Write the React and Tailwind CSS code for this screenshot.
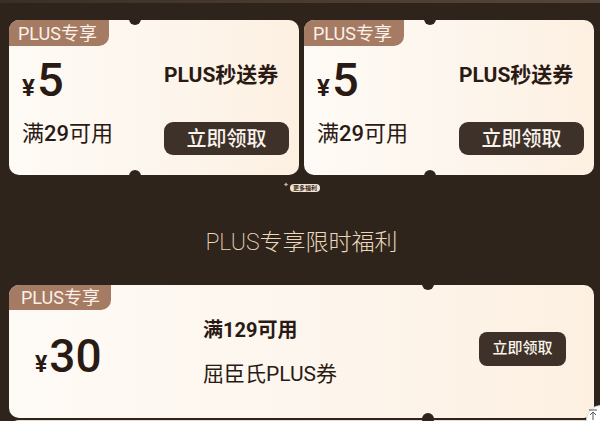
import React from "react";

const FONT = { fontFamily: 'Roboto, "Noto Sans CJK SC", "Noto Sans", sans-serif' };

function Notch({ className }) {
  return <div className={`absolute w-[12px] h-[12px] rounded-full bg-[#2e241c] ${className}`} />;
}

function Tag({ className = "" }) {
  return (
    <div className={`absolute left-0 top-0 bg-[#a57b64] text-[#fbf1e8] rounded-tl-[10px] rounded-br-[10px] flex items-center ${className}`}>
      PLUS专享
    </div>
  );
}

function SmallCard() {
  return (
    <div className="relative w-[290px] h-[155px] rounded-[10px] bg-gradient-to-r from-[#fefaf5] via-[#fdf6ee] to-[#fdf0e1] flex">
      <Tag className="h-[26px] w-[100px] pl-[9px] text-[18px]" />
      <Notch className="left-[120px] -top-[7px]" />
      <Notch className="left-[120px] -bottom-[7px]" />
      <div className="w-[155px] pl-[13px] pt-[36px] flex flex-col">
        <div className="flex items-baseline text-[#2a1a14] leading-none h-[48px]">
          <span className="text-[24px] font-bold mr-[2px]">¥</span>
          <span className="text-[47px] font-medium">5</span>
        </div>
        <div className="mt-[15px] text-[22px] leading-[30px] text-[#2a1a14]">
          满<span className="font-medium">29</span>可用
        </div>
      </div>
      <div className="flex-1 pt-[41px] pr-[10px] flex flex-col">
        <div className="text-[21px] leading-[28px] font-bold text-[#2a1a14] whitespace-nowrap">PLUS秒送券</div>
        <button className="mt-[33px] h-[33px] w-[125px] rounded-[9px] bg-[#3d3129] text-[#fbf4ec] text-[20px] font-medium flex items-center justify-center">
          立即领取
        </button>
      </div>
    </div>
  );
}

export default function App() {
  return (
    <div className="relative w-[600px] h-[421px] overflow-hidden bg-[#2e241c]" style={FONT}>
      <div className="h-[3px] bg-gradient-to-r from-[#3b2f25] via-[#4a3b2e] to-[#56463a]" />
      <div className="pl-[9px] pr-[6px] pt-[17px]">
        <div className="flex gap-[5px]">
          <SmallCard />
          <SmallCard />
        </div>
        <div className="h-[110px] flex flex-col items-center">
          <div className="mt-[9px] flex items-center">
            <span className="text-[7px] text-[#cdb89c] leading-none mr-[1px] -mt-[5px]">✦</span>
            <span className="h-[8px] px-[3px] rounded-full bg-[#f1e4d3] text-[#3a2c22] text-[6px] leading-[8px] font-bold">更多福利</span>
          </div>
          <div className="mt-[35px] text-[23px] leading-[32px] font-extralight text-[#ead8ba]">
            PLUS专享限时福利
          </div>
        </div>
        <div className="relative h-[133px] rounded-[10px] bg-gradient-to-r from-[#fefaf5] via-[#fdf6ee] to-[#fdf0e1] flex items-center">
          <Tag className="h-[25px] w-[102px] pl-[12px] text-[18px]" />
          <Notch className="left-[413px] -top-[7px]" />
          <Notch className="left-[413px] -bottom-[7px]" />
          <div className="w-[194px] pl-[26px] pt-[8px] flex items-baseline text-[#2a1a14] leading-none">
            <span className="text-[23px] font-bold mr-[2px]">¥</span>
            <span className="text-[46px] font-medium">30</span>
          </div>
          <div className="flex-1 flex flex-col text-[#2a1a14] pt-[2px]">
            <div className="text-[20px] leading-[28px] font-bold">满129可用</div>
            <div className="mt-[15px] text-[21px] leading-[30px]">屈臣氏PLUS券</div>
          </div>
          <button className="mr-[28px] h-[34px] w-[87px] rounded-[8px] bg-[#3d3129] text-[#fbf4ec] text-[15px] font-medium flex items-center justify-center -mt-[6px]">
            立即领取
          </button>
        </div>
        <div className="mt-[2px] h-[20px] rounded-t-[10px] bg-[#fdf8f1] border-t border-[#e6dccf]" />
      </div>
      <div className="absolute left-[586px] top-[405px] w-[30px] h-[30px] rounded-full bg-white border border-[#ddd] flex items-start justify-center pt-[3px] pr-[16px]">
        <svg width="10" height="11" viewBox="0 0 10 11" fill="none" stroke="#555" strokeWidth="1">
          <path d="M1 1h8M5 3v8M2 6l3-3 3 3" />
        </svg>
      </div>
    </div>
  );
}
